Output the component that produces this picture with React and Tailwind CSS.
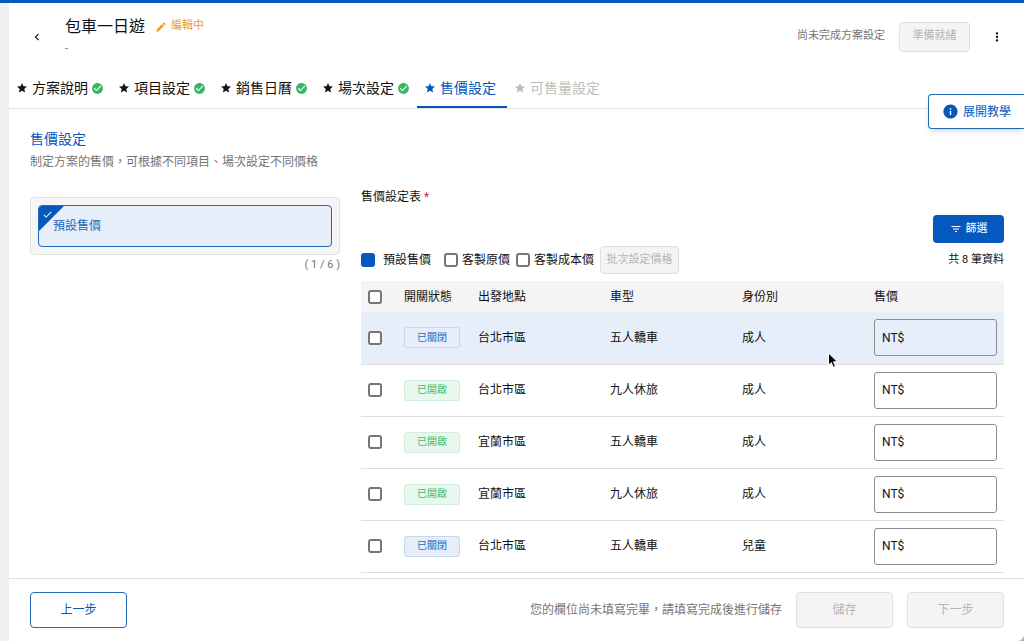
import {
  MdCheck,
  MdCheckCircle,
  MdChevronLeft,
  MdEdit,
  MdFilterList,
  MdInfo,
  MdMoreVert,
  MdStar,
} from 'react-icons/md'

const tabs = [
  { label: '方案說明', state: 'done' },
  { label: '項目設定', state: 'done' },
  { label: '銷售日曆', state: 'done' },
  { label: '場次設定', state: 'done' },
  { label: '售價設定', state: 'active' },
  { label: '可售量設定', state: 'disabled' },
]

const tabStyles = {
  done: 'border-transparent text-[#111]',
  active: 'border-[#0458be] text-[#0458be]',
  disabled: 'border-transparent text-[#bdbdbd]',
}

const rows = [
  { id: 1, open: false, place: '台北市區', car: '五人轎車', identity: '成人', hovered: true },
  { id: 2, open: true, place: '台北市區', car: '九人休旅', identity: '成人' },
  { id: 3, open: true, place: '宜蘭市區', car: '五人轎車', identity: '成人' },
  { id: 4, open: true, place: '宜蘭市區', car: '九人休旅', identity: '成人' },
  { id: 5, open: false, place: '台北市區', car: '五人轎車', identity: '兒童' },
]

function Checkbox(props) {
  return (
    <input
      type="checkbox"
      className="block size-[14px] shrink-0 appearance-none rounded-[3px] border-2 border-[#757575] bg-white checked:border-[#0458be] checked:bg-[#0458be]"
      {...props}
    />
  )
}

function DisabledButton({ className, children }) {
  return (
    <button
      type="button"
      disabled
      className={`shrink-0 rounded border border-[#dfdfdf] bg-[#f4f4f4] text-[#b5b5b5] ${className}`}
    >
      {children}
    </button>
  )
}

function StatusBadge({ open }) {
  const color = open
    ? 'border-[#cfeedb] bg-[#e8f8ee] text-[#3fbc6c]'
    : 'border-[#c3d7ee] bg-[#e6eef9] text-[#2468bb]'

  return (
    <span className={`flex h-[21px] w-14 items-center justify-center rounded-[3px] border text-[10px] ${color}`}>
      {open ? '已開啟' : '已關閉'}
    </span>
  )
}

function Header() {
  return (
    <header className="flex h-[65px] shrink-0 items-center pt-[2px] pr-5 pl-[18px]">
      <button type="button" aria-label="返回" className="grid size-5 place-items-center">
        <MdChevronLeft className="size-[14px]" />
      </button>
      <div className="ml-[18px] flex-1">
        <div className="flex items-center gap-[10px]">
          <h1 className="text-base leading-6">包車一日遊</h1>
          <span className="flex items-center gap-1 text-[11px] text-[#ee9a2c]">
            <MdEdit className="size-3" />
            編輯中
          </span>
        </div>
        <p className="text-[11px] leading-5 text-[#777]">-</p>
      </div>
      <span className="mr-[14px] text-[11px] text-[#757575]">尚未完成方案設定</span>
      <DisabledButton className="h-[30px] w-[71px] text-[11px]">準備就緒</DisabledButton>
      <button type="button" aria-label="更多" className="ml-5 grid size-[14px] place-items-center">
        <MdMoreVert className="size-[14px]" />
      </button>
    </header>
  )
}

function Tabs() {
  return (
    <nav className="flex shrink-0 border-b border-[#e0e0e0]">
      {tabs.map(({ label, state }) => (
        <button
          key={label}
          type="button"
          disabled={state === 'disabled'}
          className={`flex h-10 min-w-[90px] items-center border-b-2 px-[7px] pt-[2px] text-sm ${tabStyles[state]}`}
        >
          <MdStar className="mr-1 size-3 shrink-0" />
          {label}
          {state === 'done' && <MdCheckCircle className="ml-[3px] size-[13px] shrink-0 text-[#33b864]" />}
        </button>
      ))}
    </nav>
  )
}

function PriceGroups() {
  return (
    <section className="w-[310px] shrink-0">
      <div className="rounded border border-[#e2e2e2] bg-[#f5f5f5] p-[7px]">
        <button
          type="button"
          className="relative flex h-[42px] w-full items-center overflow-hidden rounded border border-[#2468bb] bg-[#e6eef9] pl-[14px] text-xs text-[#2468bb]"
        >
          <svg className="absolute top-0 left-0 size-[25px] fill-[#0458be]" viewBox="0 0 25 25" aria-hidden="true">
            <path d="M0 0h25L0 25z" />
          </svg>
          <MdCheck className="absolute top-[3px] left-[3px] size-[11px] text-white" />
          預設售價
        </button>
      </div>
      <p className="text-right text-[11px] leading-5 text-[#757575]">( 1 / 6 )</p>
    </section>
  )
}

function PriceTable() {
  return (
    <table className="mt-[7px] w-full table-fixed text-left">
      <thead>
        <tr className="h-[31px] bg-[#f4f4f4]">
          <th className="w-[43px] rounded-tl-[3px] pl-[7px]">
            <Checkbox aria-label="全選" />
          </th>
          <th className="w-[74px] font-normal">開關狀態</th>
          <th className="font-normal">出發地點</th>
          <th className="font-normal">車型</th>
          <th className="font-normal">身份別</th>
          <th className="w-[130px] rounded-tr-[3px] font-normal">售價</th>
        </tr>
      </thead>
      <tbody>
        {rows.map((row) => (
          <tr
            key={row.id}
            className={`h-[52px] border-b border-[#dedede] ${row.hovered ? 'bg-[#e6eef9]' : 'bg-white'}`}
          >
            <td className="pl-[7px]">
              <Checkbox aria-label={`選取第 ${row.id} 筆`} />
            </td>
            <td>
              <StatusBadge open={row.open} />
            </td>
            <td>{row.place}</td>
            <td>{row.car}</td>
            <td>{row.identity}</td>
            <td className="pr-[7px]">
              <label className="flex h-[37px] items-center rounded-[3px] border border-[#8c8c8c] px-[7px]">
                NT$
                <input
                  type="text"
                  inputMode="numeric"
                  aria-label="售價"
                  className="ml-1 w-full min-w-0 bg-transparent outline-none"
                />
              </label>
            </td>
          </tr>
        ))}
      </tbody>
    </table>
  )
}

function PriceSettings() {
  return (
    <section className="min-w-0 flex-1 text-xs">
      <h3 className="-mt-2 leading-4">
        售價設定表 <span className="text-[#d0313f]">*</span>
      </h3>
      <div className="mt-[10px] flex justify-end">
        <button
          type="button"
          className="flex h-7 w-[71px] items-center justify-center gap-1 rounded bg-[#0458be] text-[11px] text-white"
        >
          <MdFilterList className="size-3" />
          篩選
        </button>
      </div>
      <div className="mt-[3px] flex items-center">
        <label className="mr-[13px] flex items-center gap-2">
          <Checkbox defaultChecked />
          預設售價
        </label>
        <label className="mr-[6px] flex items-center gap-1">
          <Checkbox />
          客製原價
        </label>
        <label className="mr-[6px] flex items-center gap-1">
          <Checkbox />
          客製成本價
        </label>
        <DisabledButton className="h-7 w-[79px] text-[11px]">批次設定價格</DisabledButton>
        <span className="ml-auto text-[11px]">共 8 筆資料</span>
      </div>
      <PriceTable />
    </section>
  )
}

function Footer() {
  return (
    <footer className="flex h-[63px] shrink-0 items-center border-t border-[#e0e0e0] pr-5 pl-[21px] text-xs">
      <button type="button" className="h-9 w-[97px] rounded border border-[#2468bb] text-[#0458be]">
        上一步
      </button>
      <span className="mr-[14px] ml-auto text-[#757575]">您的欄位尚未填寫完畢，請填寫完成後進行儲存</span>
      <DisabledButton className="mr-[14px] h-9 w-[97px]">儲存</DisabledButton>
      <DisabledButton className="h-9 w-[97px]">下一步</DisabledButton>
    </footer>
  )
}

function App() {
  return (
    <div
      lang="zh-Hant"
      className="relative flex h-screen flex-col overflow-hidden border-t-3 border-[#0458be] bg-white font-['Roboto','Noto_Sans_CJK_TC',sans-serif] text-[#111]"
    >
      <div className="flex min-h-0 flex-1">
        <aside className="w-[9px] shrink-0 bg-[#f0f0f2]" />
        <div className="flex min-w-0 flex-1 flex-col">
          <Header />
          <Tabs />
          <main className="min-h-0 flex-1 overflow-hidden pt-5 pr-5 pl-[21px]">
            <h2 className="text-sm leading-5 text-[#0458be]">售價設定</h2>
            <p className="mt-[3px] text-xs leading-5 text-[#757575]">
              制定方案的售價，可根據不同項目、場次設定不同價格
            </p>
            <div className="mt-[25px] flex gap-[21px]">
              <PriceGroups />
              <PriceSettings />
            </div>
          </main>
          <Footer />
        </div>
      </div>

      <button
        type="button"
        className="absolute top-[91px] right-0 flex h-[35px] w-24 items-center gap-1 rounded-l border border-r-0 border-[#2468bb] bg-white pl-[13px] text-xs text-[#0458be] shadow-md"
      >
        <MdInfo className="size-[17px]" />
        展開教學
      </button>

      {/* mouse pointer */}
      <svg className="absolute top-[349px] left-[827px] h-[18px] w-3" viewBox="0 0 12 18" aria-hidden="true">
        <path d="M1.5 1v12.2l2.8-2.6 2 4.7 2.2-.9-2-4.6h3.9z" fill="#000" stroke="#fff" strokeWidth="1" />
      </svg>

      {/* rounded window corner */}
      <svg className="absolute right-0 bottom-0 size-2 fill-[#b5b5b5]" viewBox="0 0 8 8" aria-hidden="true">
        <path d="M8 2v6H2q5-1 6-6z" />
      </svg>
    </div>
  )
}

export default App
